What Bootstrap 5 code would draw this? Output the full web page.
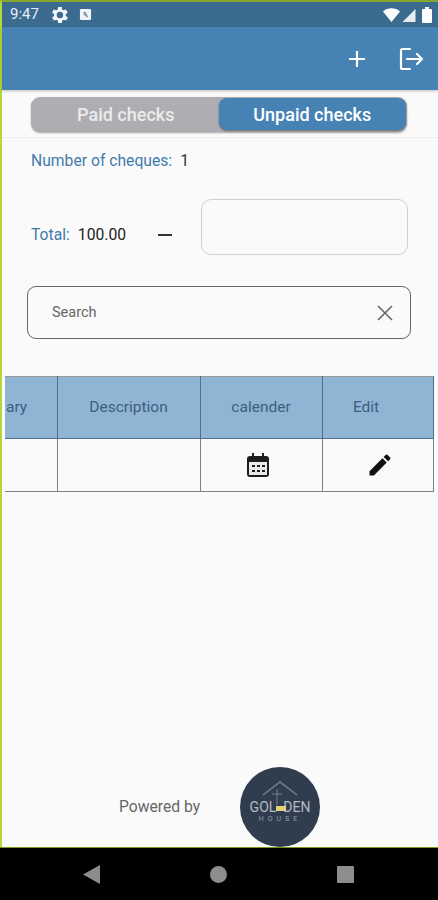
<!DOCTYPE html>
<html lang="en">
<head>
  <meta charset="UTF-8">
  <title>Checks</title>
  <link href="https://cdn.jsdelivr.net/npm/bootstrap@5.3.3/dist/css/bootstrap.min.css" rel="stylesheet" />
  <style>
    html, body { height: 900px; overflow: hidden; }
    body { font-family: Roboto, "Liberation Sans", sans-serif; background: #fafafa; color: #222; }
    .phone-frame { width: 438px; height: 900px; border-left: 2px solid #b4d83c; border-top: 2px solid #86a62e; }
    .status-strip { height: 25px; background: #3c6b90; color: #e6eef4; font-size: 15px; padding: 0 6px 0 8px; }
    .gear-gap { margin-left: 9px; }
    .doc-gap { margin-left: 9px; }
    .status-right { gap: 2px; }
    .app-strip { height: 63px; background: #4682b4; padding-right: 14px; gap: 33px; box-shadow: 0 1px 3px rgba(0,0,0,.25); }
    .tab-wrap { height: 48px; border-bottom: 1px solid #eee; padding: 7px 29px 0; margin-bottom: 12px; }
    .tab-track { width: 376px; height: 35px; background: #aeaeb2; border-radius: 9px; box-shadow: 0 1px 2px rgba(0,0,0,.35); font-size: 18px; font-weight: 500; color: #fff; }
    .tab-off { width: 188px; color: #ececec; padding-left: 2px; }
    .tab-on { width: 188px; height: 32px; background: #4682b4; border-radius: 8px; box-shadow: 0 1px 2px rgba(0,0,0,.4); margin-bottom: 1px; margin-right: 1px; }
    .info-text { font-size: 15.7px; line-height: 22px; padding-left: 29px; }
    .info-label { color: #3f7cab; }
    .info-count { color: #333; }
    .total-row { padding-left: 29px; margin-top: 27px; height: 56px; font-size: 15.7px; line-height: 22px; }
    .total-low { margin-top: 16px; }
    .total-dash { width: 14px; height: 2px; background: #333; margin: 16px 29px 0 32px; }
    .amount-box { width: 207px; height: 56px; border: 1px solid #cfcfcf; border-radius: 10px; }
    .search-box { width: 384px; height: 53px; margin: 31px 0 37px 25px; border: 1px solid #666; border-radius: 9px; padding: 0 17px 0 24px; font-size: 14.5px; color: #666; }
    .grid-wrap { margin-left: 3px; width: 428px; }
    .cheque-grid { table-layout: fixed; width: 428px; margin: 0; border-collapse: collapse; font-size: 15.5px; }
    .cheque-grid th, .cheque-grid td { border: 1px solid #808080; padding: 0; text-align: center; vertical-align: middle; background: transparent; box-shadow: none; }
    .cheque-grid tr > :first-child { border-left: 0; }
    .cheque-grid th { height: 62px; background: #90b4d4; color: #3c5f7e; font-weight: 400; border-color: #4f7090; border-top-color: #999; }
    .cheque-grid td { height: 53px; }
    .clip-cell { text-align: left; padding-left: 1px; }
    .edit-head { padding-right: 23px; }
    .cal-cell { padding-right: 6px !important; }
    .pen-cell { padding-left: 4px !important; }
    .foot-text { font-size: 15.7px; color: #666; gap: 40px; padding-left: 117px; height: 80px; }
    .brand-disc { width: 80px; height: 80px; }
    .soft-bar { height: 53px; background: #000; border-top: 1px solid #7c9a1e; gap: 110px; padding-left: 83px; margin-left: -2px; width: 438px; }
  </style>
</head>
<body>
  <div class="phone-frame d-flex flex-column">
    <div class="status-strip d-flex align-items-center">
      <span>9:47</span>
      <svg class="gear-gap" width="22" height="22" viewBox="0 0 24 24" fill="#f2f5f8"><path d="M19.400 13a7.500 7.500 0 0 0 0-2l2.100-1.600-2-3.500-2.500 1a7.400 7.400 0 0 0-1.700-1L15 3.300h-4l-.4 2.600a7.400 7.400 0 0 0-1.700 1l-2.500-1-2 3.500L6.600 11a7.500 7.500 0 0 0 0 2l-2.100 1.600 2 3.500 2.500-1a7.400 7.400 0 0 0 1.700 1l.4 2.600h4l.4-2.600a7.400 7.400 0 0 0 1.700-1l2.500 1 2-3.500zM13 15.500a3.500 3.500 0 1 1 0-7 3.500 3.500 0 0 1 0 7z"/></svg>
      <svg class="doc-gap" width="13" height="13" viewBox="0 0 14 14"><rect x="1" y="1" width="12" height="12" rx="1.500" fill="#f2f5f8"/><path d="M5 4h2l3 6H8L7 8H5z" fill="#7f9cb4"/></svg>
      <span class="ms-auto d-flex align-items-center status-right">
        <svg width="17" height="14" viewBox="0 0 17 14" fill="#fff"><path d="M0 3.500C4.500-.8 12.500-.8 17 3.500L8.500 14z"/></svg>
        <svg class="me-1" width="14" height="14" viewBox="0 0 13 14"><path d="M0 14 13 1v13z" fill="#e8edf2"/></svg>
        <svg width="10" height="16" viewBox="0 0 10 16" fill="#fff"><path d="M3 0h4v2h2a1 1 0 0 1 1 1v12a1 1 0 0 1-1 1H1a1 1 0 0 1-1-1V3a1 1 0 0 1 1-1h2z"/></svg>
      </span>
    </div>
    <div class="app-strip d-flex align-items-center justify-content-end">
      <svg width="18" height="18" viewBox="0 0 18 18" stroke="#fff" stroke-width="2.200" fill="none"><path d="M9 1v16M1 9h16"/></svg>
      <svg width="25" height="24" viewBox="0 0 25 24" stroke="#fff" stroke-width="2.200" fill="none" stroke-linecap="round" stroke-linejoin="round"><path d="M11 2H3.500A1.500 1.500 0 0 0 2 3.500v17A1.500 1.500 0 0 0 3.500 22H11M8 12h15M18 7l5 5-5 5"/></svg>
    </div>
    <div class="tab-wrap">
      <div class="tab-track d-flex align-items-center">
        <div class="tab-off text-center">Paid checks</div>
        <div class="tab-on d-flex align-items-center justify-content-center">Unpaid checks</div>
      </div>
    </div>
    <div class="info-text d-flex gap-2"><span class="info-label">Number of cheques:</span><span class="info-count">1</span></div>
    <div class="total-row d-flex align-items-center">
      <span class="info-label total-low me-2">Total:</span>
      <span class="total-low">100.00</span>
      <span class="total-dash"></span>
      <div class="amount-box"></div>
    </div>
    <div class="search-box d-flex align-items-center justify-content-between">
      <span>Search</span>
      <svg width="16" height="16" viewBox="0 0 16 16" stroke="#666" stroke-width="1.600"><path d="M1 1l14 14M15 1 1 15"/></svg>
    </div>
    <div class="grid-wrap">
      <table class="table cheque-grid">
        <colgroup><col style="width:52px"><col style="width:143px"><col style="width:122px"><col style="width:111px"></colgroup>
        <thead>
          <tr>
            <th><div class="clip-cell">ary</div></th>
            <th>Description</th>
            <th>calender</th>
            <th><span class="edit-head">Edit</span></th>
          </tr>
        </thead>
        <tbody>
          <tr>
            <td></td>
            <td></td>
            <td class="cal-cell">
              <svg width="22" height="24" viewBox="0 0 22 24"><path d="M5 0h2v3h8V0h2v3h2a3 3 0 0 1 3 3v15a3 3 0 0 1-3 3H3a3 3 0 0 1-3-3V6a3 3 0 0 1 3-3h2z" fill="#1d1d1d"/><rect x="2" y="9" width="18" height="13" fill="#e9e9e9"/><path d="M5 12h3v2H5zm5 0h3v2h-3zm5 0h3v2h-3zM5 17h3v2H5zm5 0h3v2h-3zm5 0h3v2h-3z" fill="#1d1d1d"/></svg>
            </td>
            <td class="pen-cell">
              <svg width="28" height="28" viewBox="0 0 24 24" fill="#111"><path d="M3 17.250V21h3.750L17.810 9.940l-3.750-3.750zM20.710 7.040a1 1 0 0 0 0-1.410l-2.340-2.340a1 1 0 0 0-1.410 0l-1.830 1.830 3.750 3.750z"/></svg>
            </td>
          </tr>
        </tbody>
      </table>
    </div>
    <div class="flex-grow-1"></div>
    <div class="foot-text d-flex align-items-center">
      <span>Powered by</span>
      <svg class="brand-disc" viewBox="0 0 80 80">
        <circle cx="40" cy="40" r="40" fill="#2f3d4e"/>
        <path d="M23 28 40 15l17 13" stroke="#76818c" stroke-width="1.500" fill="none"/>
        <path d="M37 22v16M32 27h10" stroke="#76818c" stroke-width="1"/>
        <text x="40" y="45" text-anchor="middle" font-size="14" font-family="Roboto, sans-serif" fill="#b4bbc3">GOL&#160;&#160;DEN</text>
        <rect x="36" y="39" width="10" height="5" fill="#e6d27a"/>
        <text x="40" y="54" text-anchor="middle" font-size="7" letter-spacing="4" font-family="Roboto, sans-serif" fill="#98a2ad">HOUSE</text>
      </svg>
    </div>
    <div class="soft-bar d-flex align-items-center">
      <svg width="17" height="19" viewBox="0 0 17 19" fill="#8d8d8d"><path d="M17 0v19L0 9.500z"/></svg>
      <svg width="17" height="17" viewBox="0 0 17 17" fill="#8d8d8d"><circle cx="8.500" cy="8.500" r="8.500"/></svg>
      <svg width="17" height="17" viewBox="0 0 17 17" fill="#8d8d8d"><rect width="17" height="17" rx="1"/></svg>
    </div>
  </div>
</body>
</html>
